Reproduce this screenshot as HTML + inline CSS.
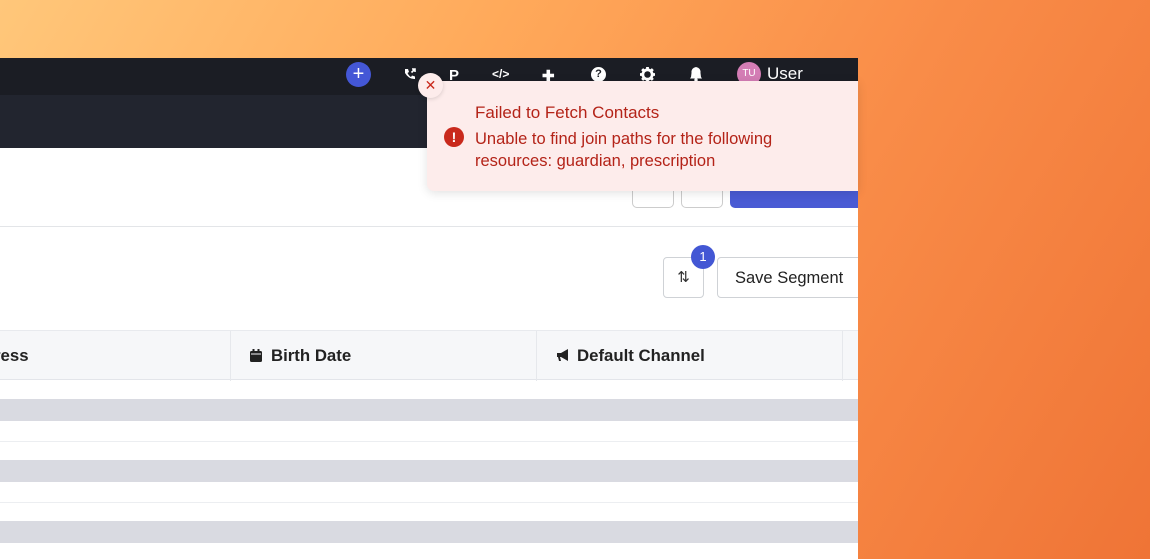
<!DOCTYPE html>
<html><head><meta charset="utf-8"><style>
*{margin:0;padding:0;box-sizing:border-box}
body{width:1150px;height:559px;overflow:hidden;position:relative;font-family:"Liberation Sans",sans-serif;
background:linear-gradient(120deg,#ffc77a 0%,#ffa95a 35%,#f98c48 65%,#ef7436 100%);}
.app{position:absolute;left:0;top:58px;width:858px;height:501px;background:#fff;overflow:hidden}
.top{position:absolute;left:0;top:0;width:858px;height:37px;background:#1b1d24}
.sub{position:absolute;left:0;top:37px;width:858px;height:53px;background:#22252f}
.ic{position:absolute;top:9px;color:#fff;font-weight:bold;font-size:15px}
.hdr{position:absolute;left:0;top:272px;width:858px;height:50px;background:#f6f7f9;border-top:1px solid #e8eaee;border-bottom:1px solid #e3e5ea}
.col{position:absolute;top:0;height:50px;border-left:1px solid #e6e8ec}
.ht{position:absolute;top:15px;font-size:16.8px;font-weight:bold;color:#222}
.row{position:absolute;left:0;width:858px}
.toast{position:absolute;left:427px;top:81px;width:431px;height:110px;background:#fdeceb;border-radius:7px 0 0 7px;box-shadow:0 2px 10px rgba(0,0,0,.12)}
</style></head><body>
<div class="app">
 <div class="top">
  <div style="position:absolute;left:346px;top:4px;width:25px;height:25px;border-radius:50%;background:#4457d6;color:#fff;text-align:center;line-height:24px;font-size:20px">+</div>
  <svg style="position:absolute;left:403px;top:9px" width="14" height="14" viewBox="0 0 14 14"><path d="M2 2 L5 2 L6 5 L4.5 6 Q6 9 8 10 L9 8.5 L12 9.5 L12 12 Q6 12.5 2 6 Z" fill="#fff"/><path d="M9 2 L12 2 L12 5 M12 2 L8.5 5.5" stroke="#fff" stroke-width="1.6" fill="none"/></svg>
  <div class="ic" style="left:449px">P</div>
  <div class="ic" style="left:492px;font-size:12px">&lt;/&gt;</div>
  <div class="ic" style="left:542px">✚</div>
  <div style="position:absolute;left:591px;top:9px;width:15px;height:15px;border-radius:50%;background:#fff;color:#1b1d24;font-size:11px;font-weight:bold;text-align:center;line-height:15px">?</div>
  <svg style="position:absolute;left:640px;top:9px" width="15" height="15" viewBox="0 0 16 16"><circle cx="8" cy="8" r="5" fill="none" stroke="#fff" stroke-width="3"/><g stroke="#fff" stroke-width="3"><path d="M8 0V3M8 13V16M0 8H3M13 8H16M2.3 2.3L4.4 4.4M11.6 11.6L13.7 13.7M2.3 13.7L4.4 11.6M11.6 4.4L13.7 2.3"/></g></svg>
  <svg style="position:absolute;left:689px;top:8px" width="14" height="16" viewBox="0 0 14 16"><path d="M7 1 Q2 2 2.5 7 L2 11 L1 12.5 H13 L12 11 L11.5 7 Q12 2 7 1Z" fill="#fff"/><circle cx="7" cy="14" r="1.7" fill="#fff"/></svg>
  <div style="position:absolute;left:737px;top:4px;width:24px;height:24px;border-radius:50%;background:#d47db5;color:#fff;font-size:10px;text-align:center;line-height:24px">TU</div>
  <div style="position:absolute;left:767px;top:6px;color:#fff;font-size:17px">User</div>
 </div>
 <div class="sub"></div>
 <div style="position:absolute;left:632px;top:110px;width:42px;height:40px;border:1px solid #ccc;border-radius:5px"></div>
 <div style="position:absolute;left:681px;top:110px;width:42px;height:40px;border:1px solid #ccc;border-radius:5px"></div>
 <div style="position:absolute;left:730px;top:110px;width:140px;height:40px;background:#4a5bd4;border-radius:5px"></div>
 <div style="position:absolute;left:0;top:168px;width:858px;height:1px;background:#e3e5e8"></div>
 <div style="position:absolute;left:663px;top:199px;width:41px;height:41px;border:1px solid #cfd2d6;border-radius:4px;text-align:center;line-height:39px;font-size:15px;color:#333">⇅</div>
 <div style="position:absolute;left:691px;top:187px;width:24px;height:24px;border-radius:50%;background:#4357d4;color:#fff;font-size:13px;text-align:center;line-height:24px">1</div>
 <div style="position:absolute;left:717px;top:199px;width:150px;height:41px;border:1px solid #cfd2d6;border-radius:4px;padding:11px 0 0 17px;font-size:16.5px;color:#222">Save Segment</div>
 <div class="hdr">
  <div class="ht" style="left:-6px">ress</div>
  <div class="col" style="left:230px"></div>
  <svg style="position:absolute;left:250px;top:18px" width="12" height="13" viewBox="0 0 12 13"><rect x="0" y="2" width="12" height="11" rx="1.5" fill="#222"/><rect x="2.5" y="0" width="2" height="3" fill="#222"/><rect x="7.5" y="0" width="2" height="3" fill="#222"/><rect x="1" y="4.5" width="10" height="1" fill="#f6f7f9"/></svg>
  <div class="ht" style="left:271px">Birth Date</div>
  <div class="col" style="left:536px"></div>
  <svg style="position:absolute;left:556px;top:18px" width="14" height="13" viewBox="0 0 14 13"><path d="M1 4 H5 L12 0 V12 L5 8 H4 L5 12 H3 L2 8 H1 Z" fill="#222"/></svg>
  <div class="ht" style="left:577px">Default Channel</div>
  <div class="col" style="left:842px"></div>
 </div>
 <div class="row" style="top:341px;height:22px;background:#d9dae1"></div>
 <div class="row" style="top:383px;height:1px;background:#eceef1"></div>
 <div class="row" style="top:402px;height:22px;background:#d9dae1"></div>
 <div class="row" style="top:444px;height:1px;background:#eceef1"></div>
 <div class="row" style="top:463px;height:22px;background:#d9dae1"></div>
</div>
<div class="toast">
 <div style="position:absolute;left:17px;top:46px;width:20px;height:20px;border-radius:50%;background:#c9291c;color:#fff;font-weight:bold;font-size:14px;text-align:center;line-height:20px">!</div>
 <div style="position:absolute;left:48px;top:22px;color:#b42318;font-size:17px">Failed to Fetch Contacts</div>
 <div style="position:absolute;left:48px;top:47px;color:#b42318;font-size:16.5px;line-height:22px;width:340px">Unable to find join paths for the following resources: guardian, prescription</div>
</div>
<div style="position:absolute;left:418px;top:73px;width:25px;height:25px;border-radius:50%;background:#fdeceb;box-shadow:0 1px 4px rgba(0,0,0,.15);color:#c9291c;text-align:center;line-height:24px;font-size:14px">✕</div>
</body></html>
